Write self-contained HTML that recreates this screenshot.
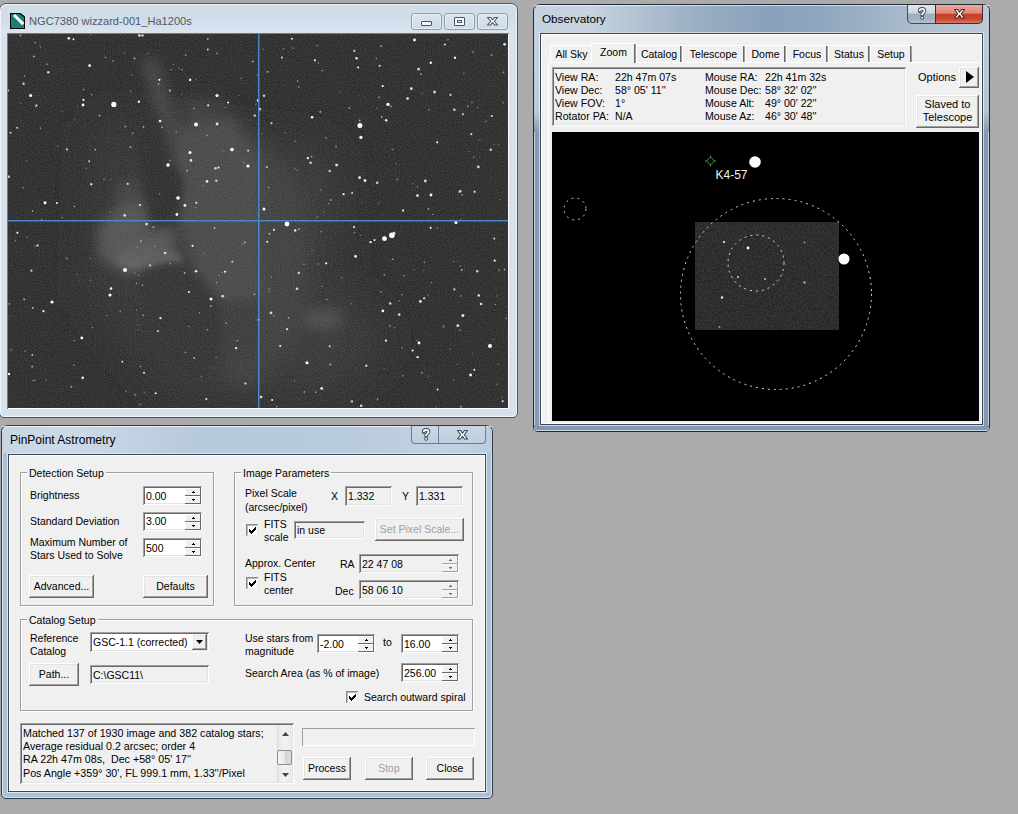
<!DOCTYPE html>
<html><head><meta charset="utf-8">
<style>
*{box-sizing:border-box}
html,body{margin:0;padding:0}
body{width:1018px;height:814px;overflow:hidden;position:relative;background:#ababab;font-family:"Liberation Sans",sans-serif;font-size:10.5px;color:#000}
.a{position:absolute}
.t{position:absolute;white-space:nowrap;line-height:13px}
.sunk{background:#fff;box-shadow:inset 1px 1px #a0a0a0,inset -1px -1px #fff,inset 2px 2px #696969,inset -2px -2px #e3e3e3}
.sunkg{background:#f0f0f0;box-shadow:inset 1px 1px #a0a0a0,inset -1px -1px #fff,inset 2px 2px #696969,inset -2px -2px #e3e3e3}
.btn{background:#f0f0f0;box-shadow:inset -1px -1px #696969,inset 1px 1px #fff,inset -2px -2px #a0a0a0,inset 2px 2px #e3e3e3;text-align:center;line-height:13px}
.grp{border:1px solid #a0a0a0;box-shadow:1px 1px #fff,inset 1px 1px #fff}
.gl{position:absolute;background:#f0f0f0;padding:0 2px;line-height:13px;white-space:nowrap}
.win{position:absolute;border:1px solid #3f4b58;border-radius:7px 7px 5px 5px}
.client{position:absolute;background:#f0f0f0;border:1px solid #5b6b7d}
.spin{position:absolute;width:16px}
.spin i{position:absolute;left:0;width:16px;height:8px;background:#f0f0f0;box-shadow:inset -1px -1px #696969,inset 1px 1px #fff}
.spin i:after{content:"";position:absolute;left:7px;width:3px;height:2px;background:#000}
.spin i.u{top:0}.spin i.d{top:8px}
.spin i.u:after{top:3px;clip-path:polygon(33% 0,67% 0,67% 50%,100% 50%,100% 100%,0 100%,0 50%,33% 50%)}
.spin i.d:after{top:3px;clip-path:polygon(0 0,100% 0,100% 50%,67% 50%,67% 100%,33% 100%,33% 50%,0 50%)}
.chk{position:absolute;width:12px;height:12px;background:#fff;box-shadow:inset 1px 1px #8a8a8a,inset -1px -1px #e8e8e8,inset 2px 2px #b8b8b8}
.tab{position:absolute;top:45px;height:17px;background:#f0f0f0;box-shadow:inset 1px 1px #fff,inset -1px 0 #a0a0a0,inset -2px 0 #696969;text-align:center;line-height:18px;font-size:10.5px}
</style></head><body>

<!-- ================= NGC7380 image window ================= -->
<div class="a" style="left:-1px;top:3px;width:519px;height:415px;border:1px solid #4c5560;border-radius:7px 7px 5px 5px;background:linear-gradient(#d2deea,#d0dce9 14px,#d9e4ef 28px,#d5e1ed 40px);box-shadow:inset 0 0 0 1px #eef4fa"></div>
<div class="a" style="left:10px;top:13px;width:15px;height:16px;background:#000;clip-path:polygon(0 0,70% 0,100% 22%,100% 100%,0 100%)"></div>
<div class="a" style="left:11px;top:14px;width:13px;height:14px;background:#1a7f7a;clip-path:polygon(0 0,68% 0,100% 24%,100% 100%,0 100%)"></div>
<div class="a" style="left:13px;top:16px;width:3px;height:13px;background:#fff;transform:rotate(-45deg);transform-origin:0 0"></div>
<div class="t" style="left:29px;top:14px;font-size:11.1px;color:#505a66;line-height:14px">NGC7380 wizzard-001_Ha1200s</div>
<div class="a" style="left:411px;top:13px;width:31px;height:17px;border:1px solid #8d9caf;border-radius:3px;background:linear-gradient(#dbe5ef,#cfdbe8);box-shadow:inset 0 0 0 1px rgba(255,255,255,.4)"></div>
<div class="a" style="left:444px;top:13px;width:31px;height:17px;border:1px solid #8d9caf;border-radius:3px;background:linear-gradient(#dbe5ef,#cfdbe8);box-shadow:inset 0 0 0 1px rgba(255,255,255,.4)"></div>
<div class="a" style="left:477px;top:13px;width:31px;height:17px;border:1px solid #8d9caf;border-radius:3px;background:linear-gradient(#dbe5ef,#cfdbe8);box-shadow:inset 0 0 0 1px rgba(255,255,255,.4)"></div>
<div class="a" style="left:421px;top:21px;width:11px;height:5px;border:1px solid #4a5460;border-radius:1px;background:#f4f6f8"></div>
<div class="a" style="left:454px;top:17px;width:11px;height:9px;border:1px solid #4a5460;border-radius:1px;background:#f4f6f8"></div>
<div class="a" style="left:457px;top:20px;width:5px;height:3px;border:1px solid #4a5460"></div>
<svg class="a" style="left:487px;top:17px" width="12" height="10"><path d="M0.5 0.5H3.6L5.5 2.9L7.4 0.5H10.5L7.3 4.25L10.5 8H7.4L5.5 5.6L3.6 8H0.5L3.7 4.25Z" fill="#fff" stroke="#4a5460" stroke-width="1.1" stroke-linejoin="round"/></svg>
<div class="a" style="left:7px;top:33px;width:502px;height:376px;box-shadow:inset 1px 1px #7a7a7a,inset -1px -1px #fff"></div>
<div class="a" style="left:8px;top:34px;width:500px;height:374px;overflow:hidden"><svg width="500" height="374" viewBox="0 0 500 374">
<defs>
<filter id="b1" x="-50%" y="-50%" width="200%" height="200%"><feGaussianBlur stdDeviation="10"/></filter>
<filter id="b2" x="-50%" y="-50%" width="200%" height="200%"><feGaussianBlur stdDeviation="6"/></filter>
<filter id="b4" x="-50%" y="-50%" width="200%" height="200%"><feGaussianBlur stdDeviation="5"/></filter>
<filter id="grain"><feTurbulence type="fractalNoise" baseFrequency="0.8" numOctaves="1" seed="5"/><feColorMatrix values="0 0 0 0 0.3  0 0 0 0 0.3  0 0 0 0 0.3  0 0 0 1.4 -0.5"/></filter>
<filter id="b5" x="-50%" y="-50%" width="200%" height="200%"><feGaussianBlur stdDeviation="3"/></filter>
<filter id="b3" x="-50%" y="-50%" width="200%" height="200%"><feGaussianBlur stdDeviation="22"/></filter>
</defs>
<rect width="500" height="374" fill="#2c2c2c"/>
<g transform="translate(-8,-34)">
<g filter="url(#b3)">
 <path d="M95 120 L330 150 L345 395 L180 405 L90 300 Z" fill="#363636"/>
 <ellipse cx="300" cy="200" rx="35" ry="50" fill="#3a3a3a"/>
 <ellipse cx="310" cy="340" rx="70" ry="50" fill="#393939"/>
</g>
<g filter="url(#b1)">
 <path d="M180 100 L215 100 L260 140 L290 180 L310 250 L300 330 L250 390 L225 380 L220 300 L180 220 Z" fill="#414141"/>
</g>
<g filter="url(#b2)">
 <path d="M178 130 L230 120 L258 160 L262 300 L225 304 L195 270 L178 220 Z" fill="#4a4a4a"/>
 <path d="M140 58 L158 58 L192 171 L172 175 Z" fill="#434343"/>
 <path d="M115 185 L150 175 L165 200 L155 222 L118 225 Z" fill="#424242"/>
 <path d="M98 225 L122 205 L152 200 L172 220 L178 262 L160 274 L125 274 L98 258 Z" fill="#535353"/>
 <ellipse cx="142" cy="256" rx="26" ry="13" fill="#5c5c5c"/>
 <path d="M225 300 L258 300 L262 360 L232 360 Z" fill="#3b3b3b"/>
 <ellipse cx="323" cy="319" rx="20" ry="11" fill="#4c4c4c"/>
</g>
<g filter="url(#b5)">
 <path d="M118 258 Q140 272 168 258 Q176 254 180 262" fill="none" stroke="#666" stroke-width="6"/>
 <path d="M110 232 Q120 222 132 228" fill="none" stroke="#5a5a5a" stroke-width="5"/>
 <path d="M182 140 Q188 190 182 225" fill="none" stroke="#4e4e4e" stroke-width="6"/>
</g>
<g filter="url(#b4)">
 <path d="M135 110 L160 120 L172 165 L185 180 L178 225 L150 230 L140 180 Z" fill="#2e2e2e"/>
 <path d="M140 270 L170 262 L195 280 L215 300 L222 340 L210 370 L170 368 L145 330 Z" fill="#323232"/>
</g>
</g>
<rect width="500" height="374" filter="url(#grain)" opacity="0.4"/>
<circle cx="105.8" cy="70.4" r="2.6" fill="#fff"/>
<circle cx="188.0" cy="90.5" r="2" fill="#fff"/>
<circle cx="224.0" cy="115.6" r="1.8" fill="#fff"/>
<circle cx="160.0" cy="131.0" r="1.8" fill="#fff"/>
<circle cx="351.9" cy="91.5" r="2.5" fill="#fff"/>
<circle cx="352.9" cy="103.3" r="1.6" fill="#fff"/>
<circle cx="380.0" cy="70.4" r="1.7" fill="#fff"/>
<circle cx="279.0" cy="190.0" r="2.4" fill="#fff"/>
<circle cx="383.9" cy="201.3" r="2.8" fill="#fff"/>
<circle cx="376.5" cy="204.7" r="2.4" fill="#fff"/>
<circle cx="117.0" cy="236.0" r="2" fill="#fff"/>
<circle cx="102.0" cy="261.0" r="1.6" fill="#fff"/>
<circle cx="44.0" cy="268.0" r="1.6" fill="#fff"/>
<circle cx="482.0" cy="312.0" r="2" fill="#fff"/>
<circle cx="22.6" cy="61.5" r="1.5" fill="#fff"/>
<circle cx="75.0" cy="71.0" r="1.4" fill="#fff"/>
<circle cx="209.0" cy="61.5" r="1.6" fill="#fff"/>
<circle cx="240.0" cy="132.0" r="1.6" fill="#fff"/>
<circle cx="170.0" cy="164.0" r="1.8" fill="#fff"/>
<circle cx="182.0" cy="118.6" r="1.5" fill="#fff"/>
<circle cx="448.0" cy="188.5" r="1.5" fill="#fff"/>
<circle cx="423.0" cy="161.0" r="1.4" fill="#fff"/>
<circle cx="203.0" cy="265.0" r="1.5" fill="#fff"/>
<circle cx="299.0" cy="328.7" r="1.5" fill="#fff"/>
<circle cx="37.0" cy="168.8" r="1.5" fill="#fff"/>
<circle cx="256.0" cy="175.0" r="1.5" fill="#fff"/>
<circle cx="357.0" cy="146.6" r="1.4" fill="#fff"/>
<circle cx="411.0" cy="309.0" r="1.4" fill="#fff"/>
<circle cx="462.6" cy="341.0" r="1.4" fill="#fff"/>
<circle cx="73.8" cy="304.0" r="1.4" fill="#fff"/>
<circle cx="161.9" cy="56.4" r="1.0" fill="rgb(204,204,204)"/>
<circle cx="410.6" cy="35.2" r="1.4" fill="rgb(203,203,203)"/>
<circle cx="454.9" cy="80.3" r="1.0" fill="rgb(227,227,227)"/>
<circle cx="209.1" cy="90.0" r="1.4" fill="rgb(227,227,227)"/>
<circle cx="29.6" cy="211.5" r="1.1" fill="rgb(240,240,240)"/>
<circle cx="313.7" cy="354.4" r="1.4" fill="rgb(237,237,237)"/>
<circle cx="198.3" cy="365.1" r="1.0" fill="rgb(235,235,235)"/>
<circle cx="429.2" cy="108.3" r="1.1" fill="rgb(234,234,234)"/>
<circle cx="58.9" cy="115.4" r="1.1" fill="rgb(206,206,206)"/>
<circle cx="290.8" cy="239.0" r="1.2" fill="rgb(206,206,206)"/>
<circle cx="273.9" cy="23.5" r="1.0" fill="rgb(239,239,239)"/>
<circle cx="103.0" cy="254.5" r="1.3" fill="rgb(249,249,249)"/>
<circle cx="157.1" cy="219.0" r="1.3" fill="rgb(223,223,223)"/>
<circle cx="149.9" cy="297.1" r="1.1" fill="rgb(205,205,205)"/>
<circle cx="287.2" cy="196.4" r="1.2" fill="rgb(246,246,246)"/>
<circle cx="224.4" cy="227.8" r="1.0" fill="rgb(207,207,207)"/>
<circle cx="256.0" cy="61.7" r="1.2" fill="rgb(209,209,209)"/>
<circle cx="466.6" cy="157.7" r="1.0" fill="rgb(248,248,248)"/>
<circle cx="279.0" cy="295.1" r="1.2" fill="rgb(221,221,221)"/>
<circle cx="347.6" cy="222.3" r="1.4" fill="rgb(251,251,251)"/>
<circle cx="228.1" cy="314.1" r="1.2" fill="rgb(230,230,230)"/>
<circle cx="348.5" cy="24.3" r="1.2" fill="rgb(241,241,241)"/>
<circle cx="289.0" cy="254.8" r="1.3" fill="rgb(218,218,218)"/>
<circle cx="358.3" cy="331.8" r="1.2" fill="rgb(201,201,201)"/>
<circle cx="470.3" cy="132.9" r="1.4" fill="rgb(207,207,207)"/>
<circle cx="246.8" cy="81.6" r="1.2" fill="rgb(208,208,208)"/>
<circle cx="369.2" cy="148.8" r="1.3" fill="rgb(205,205,205)"/>
<circle cx="83.2" cy="150.2" r="1.2" fill="rgb(208,208,208)"/>
<circle cx="409.6" cy="323.1" r="1.2" fill="rgb(245,245,245)"/>
<circle cx="207.6" cy="134.2" r="1.3" fill="rgb(214,214,214)"/>
<circle cx="75.5" cy="65.9" r="1.1" fill="rgb(242,242,242)"/>
<circle cx="116.7" cy="181.4" r="1.4" fill="rgb(211,211,211)"/>
<circle cx="131.4" cy="1.5" r="1.3" fill="rgb(234,234,234)"/>
<circle cx="184.6" cy="211.8" r="1.1" fill="rgb(244,244,244)"/>
<circle cx="429.6" cy="355.4" r="1.0" fill="rgb(229,229,229)"/>
<circle cx="449.8" cy="291.7" r="1.4" fill="rgb(225,225,225)"/>
<circle cx="199.0" cy="147.4" r="1.3" fill="rgb(240,240,240)"/>
<circle cx="200.2" cy="71.3" r="1.1" fill="rgb(228,228,228)"/>
<circle cx="81.2" cy="127.2" r="1.0" fill="rgb(206,206,206)"/>
<circle cx="0.1" cy="56.6" r="1.0" fill="rgb(223,223,223)"/>
<circle cx="306.9" cy="26.3" r="1.1" fill="rgb(239,239,239)"/>
<circle cx="188.1" cy="237.3" r="1.2" fill="rgb(238,238,238)"/>
<circle cx="182.1" cy="45.9" r="1.3" fill="rgb(229,229,229)"/>
<circle cx="240.2" cy="116.6" r="1.1" fill="rgb(206,206,206)"/>
<circle cx="374.8" cy="276.9" r="1.3" fill="rgb(253,253,253)"/>
<circle cx="346.0" cy="193.1" r="1.1" fill="rgb(233,233,233)"/>
<circle cx="180.9" cy="258.1" r="1.0" fill="rgb(248,248,248)"/>
<circle cx="264.1" cy="366.0" r="1.0" fill="rgb(244,244,244)"/>
<circle cx="422.7" cy="193.9" r="1.1" fill="rgb(222,222,222)"/>
<circle cx="386.0" cy="199.2" r="1.4" fill="rgb(221,221,221)"/>
<circle cx="318.2" cy="229.3" r="1.1" fill="rgb(251,251,251)"/>
<circle cx="119.7" cy="149.9" r="1.1" fill="rgb(212,212,212)"/>
<circle cx="258.8" cy="133.0" r="1.0" fill="rgb(201,201,201)"/>
<circle cx="395.1" cy="176.6" r="1.1" fill="rgb(244,244,244)"/>
<circle cx="302.6" cy="128.8" r="1.2" fill="rgb(223,223,223)"/>
<circle cx="40.3" cy="38.2" r="1.3" fill="rgb(212,212,212)"/>
<circle cx="168.9" cy="180.5" r="1.4" fill="rgb(253,253,253)"/>
<circle cx="1.0" cy="340.0" r="1.2" fill="rgb(251,251,251)"/>
<circle cx="321.6" cy="312.2" r="1.0" fill="rgb(224,224,224)"/>
<circle cx="391.2" cy="280.6" r="1.3" fill="rgb(211,211,211)"/>
<circle cx="217.0" cy="237.8" r="1.0" fill="rgb(251,251,251)"/>
<circle cx="473.1" cy="270.0" r="1.3" fill="rgb(225,225,225)"/>
<circle cx="371.7" cy="31.8" r="1.1" fill="rgb(210,210,210)"/>
<circle cx="496.6" cy="10.3" r="1.4" fill="rgb(229,229,229)"/>
<circle cx="403.3" cy="54.7" r="1.4" fill="rgb(230,230,230)"/>
<circle cx="328.6" cy="131.1" r="1.4" fill="rgb(235,235,235)"/>
<circle cx="65.5" cy="5.3" r="1.0" fill="rgb(233,233,233)"/>
<circle cx="374.7" cy="52.1" r="1.1" fill="rgb(252,252,252)"/>
<circle cx="437.0" cy="10.5" r="1.1" fill="rgb(218,218,218)"/>
<circle cx="250.6" cy="285.6" r="1.2" fill="rgb(216,216,216)"/>
<circle cx="272.2" cy="312.0" r="1.0" fill="rgb(247,247,247)"/>
<circle cx="176.9" cy="171.4" r="1.4" fill="rgb(252,252,252)"/>
<circle cx="452.1" cy="157.3" r="1.4" fill="rgb(208,208,208)"/>
<circle cx="265.9" cy="195.8" r="1.0" fill="rgb(255,255,255)"/>
<circle cx="220.1" cy="68.5" r="1.0" fill="rgb(249,249,249)"/>
<circle cx="399.6" cy="64.5" r="1.3" fill="rgb(239,239,239)"/>
<circle cx="362.6" cy="208.1" r="1.2" fill="rgb(243,243,243)"/>
<circle cx="259.2" cy="207.7" r="1.0" fill="rgb(235,235,235)"/>
<circle cx="28.4" cy="71.5" r="1.0" fill="rgb(249,249,249)"/>
<circle cx="48.9" cy="169.1" r="1.0" fill="rgb(248,248,248)"/>
<circle cx="447.0" cy="23.7" r="1.2" fill="rgb(239,239,239)"/>
<circle cx="486.7" cy="226.7" r="1.1" fill="rgb(244,244,244)"/>
<circle cx="138.6" cy="190.1" r="1.3" fill="rgb(232,232,232)"/>
<circle cx="470.8" cy="261.5" r="1.2" fill="rgb(235,235,235)"/>
<circle cx="446.4" cy="75.8" r="1.3" fill="rgb(208,208,208)"/>
<circle cx="208.3" cy="146.7" r="1.2" fill="rgb(204,204,204)"/>
<circle cx="335.6" cy="160.2" r="1.1" fill="rgb(242,242,242)"/>
<circle cx="151.4" cy="45.8" r="1.1" fill="rgb(245,245,245)"/>
<circle cx="321.7" cy="137.0" r="1.2" fill="rgb(208,208,208)"/>
<circle cx="483.8" cy="82.1" r="1.0" fill="rgb(225,225,225)"/>
<circle cx="442.5" cy="60.9" r="1.1" fill="rgb(210,210,210)"/>
<circle cx="353.2" cy="371.8" r="1.3" fill="rgb(221,221,221)"/>
<circle cx="210.6" cy="133.4" r="1.0" fill="rgb(246,246,246)"/>
<circle cx="183.0" cy="126.4" r="1.3" fill="rgb(228,228,228)"/>
<circle cx="351.6" cy="143.7" r="1.4" fill="rgb(239,239,239)"/>
<circle cx="147.7" cy="359.3" r="1.0" fill="rgb(250,250,250)"/>
<circle cx="114.3" cy="327.8" r="1.0" fill="rgb(216,216,216)"/>
<circle cx="136.0" cy="338.8" r="1.1" fill="rgb(217,217,217)"/>
<circle cx="377.9" cy="306.6" r="1.2" fill="rgb(225,225,225)"/>
<circle cx="74.7" cy="343.8" r="1.4" fill="rgb(231,231,231)"/>
<circle cx="350.2" cy="33.5" r="1.0" fill="rgb(251,251,251)"/>
<circle cx="344.1" cy="159.1" r="1.0" fill="rgb(217,217,217)"/>
<circle cx="469.2" cy="237.3" r="1.2" fill="rgb(205,205,205)"/>
<circle cx="304.1" cy="83.2" r="1.2" fill="rgb(255,255,255)"/>
<circle cx="60.8" cy="4.3" r="1.4" fill="rgb(226,226,226)"/>
<circle cx="463.3" cy="100.2" r="1.1" fill="rgb(202,202,202)"/>
<circle cx="263.5" cy="89.2" r="1.0" fill="rgb(210,210,210)"/>
<circle cx="130.9" cy="67.7" r="1.2" fill="rgb(240,240,240)"/>
<circle cx="152.5" cy="284.1" r="1.2" fill="rgb(228,228,228)"/>
<circle cx="250.0" cy="66.5" r="1.2" fill="rgb(251,251,251)"/>
<circle cx="9.1" cy="93.7" r="1.0" fill="rgb(201,201,201)"/>
<circle cx="366.5" cy="206.1" r="1.1" fill="rgb(232,232,232)"/>
<circle cx="237.4" cy="349.6" r="1.0" fill="rgb(242,242,242)"/>
<circle cx="409.5" cy="161.6" r="1.3" fill="rgb(234,234,234)"/>
<circle cx="417.3" cy="147.0" r="1.4" fill="rgb(219,219,219)"/>
<circle cx="343.9" cy="367.4" r="1.2" fill="rgb(212,212,212)"/>
<circle cx="416.1" cy="264.3" r="1.1" fill="rgb(225,225,225)"/>
<circle cx="494.7" cy="367.2" r="1.1" fill="rgb(200,200,200)"/>
<circle cx="35.4" cy="277.1" r="1.2" fill="rgb(227,227,227)"/>
<circle cx="81.6" cy="31.6" r="1.3" fill="rgb(255,255,255)"/>
<circle cx="253.0" cy="363.1" r="1.4" fill="rgb(215,215,215)"/>
<circle cx="346.3" cy="16.9" r="1.1" fill="rgb(210,210,210)"/>
<circle cx="134.5" cy="1.4" r="1.2" fill="rgb(221,221,221)"/>
<circle cx="486.3" cy="204.6" r="1.1" fill="rgb(202,202,202)"/>
<circle cx="482.8" cy="115.8" r="1.2" fill="rgb(211,211,211)"/>
<circle cx="0.5" cy="142.7" r="1.3" fill="rgb(217,217,217)"/>
<circle cx="251.4" cy="75.2" r="1.4" fill="rgb(249,249,249)"/>
<circle cx="2.5" cy="98.8" r="1.0" fill="rgb(209,209,209)"/>
<circle cx="199.8" cy="15.6" r="1.0" fill="rgb(219,219,219)"/>
<circle cx="152.1" cy="87.1" r="1.4" fill="rgb(233,233,233)"/>
<circle cx="426.6" cy="58.1" r="1.4" fill="rgb(224,224,224)"/>
<circle cx="382.2" cy="269.5" r="1.3" fill="rgb(209,209,209)"/>
<circle cx="142.1" cy="231.4" r="1.1" fill="rgb(202,202,202)"/>
<circle cx="412.4" cy="267.4" r="1.4" fill="rgb(240,240,240)"/>
<circle cx="214.6" cy="262.2" r="1.4" fill="rgb(208,208,208)"/>
<circle cx="454.9" cy="281.6" r="1.4" fill="rgb(253,253,253)"/>
<circle cx="406.5" cy="6.0" r="1.4" fill="rgb(251,251,251)"/>
<circle cx="446.4" cy="255.4" r="1.1" fill="rgb(205,205,205)"/>
<circle cx="15.6" cy="49.8" r="1.2" fill="rgb(206,206,206)"/>
<circle cx="188.3" cy="168.8" r="1.0" fill="rgb(240,240,240)"/>
<circle cx="9.4" cy="198.8" r="1.1" fill="rgb(231,231,231)"/>
<circle cx="131.9" cy="170.9" r="1.0" fill="rgb(247,247,247)"/>
<circle cx="466.3" cy="335.8" r="1.0" fill="rgb(242,242,242)"/>
<circle cx="263.0" cy="278.9" r="1.3" fill="rgb(216,216,216)"/>
<circle cx="404.6" cy="316.5" r="1.1" fill="rgb(246,246,246)"/>
<circle cx="378.2" cy="86.3" r="1.3" fill="rgb(231,231,231)"/>
<circle cx="422.8" cy="28.7" r="1.2" fill="rgb(249,249,249)"/>
<circle cx="23.4" cy="236.7" r="1.1" fill="rgb(204,204,204)"/>
<circle cx="299.9" cy="124.1" r="1.2" fill="rgb(239,239,239)"/>
<circle cx="283.9" cy="4.7" r="1.0" fill="rgb(231,231,231)"/>
<circle cx="134.4" cy="251.3" r="0.7" fill="rgb(182,182,182)"/>
<circle cx="145.4" cy="193.2" r="0.9" fill="rgb(179,179,179)"/>
<circle cx="233.2" cy="44.3" r="0.7" fill="rgb(159,159,159)"/>
<circle cx="489.1" cy="350.2" r="0.6" fill="rgb(157,157,157)"/>
<circle cx="229.5" cy="306.6" r="0.9" fill="rgb(154,154,154)"/>
<circle cx="193.4" cy="342.8" r="0.7" fill="rgb(129,129,129)"/>
<circle cx="290.7" cy="53.0" r="0.8" fill="rgb(166,166,166)"/>
<circle cx="66.3" cy="306.8" r="0.8" fill="rgb(134,134,134)"/>
<circle cx="351.7" cy="86.5" r="0.9" fill="rgb(170,170,170)"/>
<circle cx="12.4" cy="1.3" r="0.9" fill="rgb(177,177,177)"/>
<circle cx="202.7" cy="272.0" r="0.9" fill="rgb(164,164,164)"/>
<circle cx="188.1" cy="45.2" r="0.8" fill="rgb(120,120,120)"/>
<circle cx="162.3" cy="126.5" r="0.9" fill="rgb(135,135,135)"/>
<circle cx="469.9" cy="73.2" r="0.6" fill="rgb(157,157,157)"/>
<circle cx="126.6" cy="24.3" r="0.9" fill="rgb(195,195,195)"/>
<circle cx="38.2" cy="346.1" r="0.8" fill="rgb(126,126,126)"/>
<circle cx="140.3" cy="19.3" r="0.8" fill="rgb(139,139,139)"/>
<circle cx="124.7" cy="99.4" r="0.8" fill="rgb(144,144,144)"/>
<circle cx="386.6" cy="293.6" r="0.9" fill="rgb(123,123,123)"/>
<circle cx="406.0" cy="236.0" r="0.7" fill="rgb(130,130,130)"/>
<circle cx="24.7" cy="273.9" r="0.9" fill="rgb(198,198,198)"/>
<circle cx="376.3" cy="241.0" r="0.8" fill="rgb(182,182,182)"/>
<circle cx="24.5" cy="346.6" r="0.7" fill="rgb(141,141,141)"/>
<circle cx="236.1" cy="128.5" r="0.8" fill="rgb(152,152,152)"/>
<circle cx="369.5" cy="365.1" r="0.8" fill="rgb(171,171,171)"/>
<circle cx="328.0" cy="112.5" r="0.9" fill="rgb(135,135,135)"/>
<circle cx="83.7" cy="60.5" r="0.7" fill="rgb(184,184,184)"/>
<circle cx="453.0" cy="185.9" r="0.7" fill="rgb(177,177,177)"/>
<circle cx="453.1" cy="372.7" r="0.9" fill="rgb(174,174,174)"/>
<circle cx="69.8" cy="72.0" r="0.6" fill="rgb(142,142,142)"/>
<circle cx="171.0" cy="34.1" r="0.7" fill="rgb(167,167,167)"/>
<circle cx="129.2" cy="213.0" r="0.6" fill="rgb(172,172,172)"/>
<circle cx="191.4" cy="278.9" r="0.7" fill="rgb(168,168,168)"/>
<circle cx="135.1" cy="281.3" r="0.9" fill="rgb(155,155,155)"/>
<circle cx="287.1" cy="134.7" r="0.7" fill="rgb(131,131,131)"/>
<circle cx="135.5" cy="92.9" r="0.9" fill="rgb(177,177,177)"/>
<circle cx="215.9" cy="116.7" r="0.6" fill="rgb(136,136,136)"/>
<circle cx="16.1" cy="265.4" r="0.9" fill="rgb(195,195,195)"/>
<circle cx="244.9" cy="27.4" r="0.9" fill="rgb(177,177,177)"/>
<circle cx="124.2" cy="40.8" r="0.7" fill="rgb(139,139,139)"/>
<circle cx="261.2" cy="255.1" r="0.9" fill="rgb(130,130,130)"/>
<circle cx="275.8" cy="14.8" r="0.7" fill="rgb(149,149,149)"/>
<circle cx="284.7" cy="14.1" r="0.8" fill="rgb(136,136,136)"/>
<circle cx="313.2" cy="197.6" r="0.9" fill="rgb(134,134,134)"/>
<circle cx="49.7" cy="112.3" r="0.7" fill="rgb(169,169,169)"/>
<circle cx="130.4" cy="295.6" r="0.6" fill="rgb(121,121,121)"/>
<circle cx="268.7" cy="372.6" r="0.8" fill="rgb(160,160,160)"/>
<circle cx="322.3" cy="330.5" r="0.9" fill="rgb(187,187,187)"/>
<circle cx="117.4" cy="92.4" r="0.9" fill="rgb(159,159,159)"/>
<circle cx="27.7" cy="72.6" r="0.9" fill="rgb(130,130,130)"/>
<circle cx="128.6" cy="249.6" r="0.8" fill="rgb(149,149,149)"/>
<circle cx="246.5" cy="260.2" r="0.9" fill="rgb(166,166,166)"/>
<circle cx="341.3" cy="74.1" r="0.8" fill="rgb(184,184,184)"/>
<circle cx="33.7" cy="185.4" r="0.7" fill="rgb(159,159,159)"/>
<circle cx="382.9" cy="72.5" r="0.9" fill="rgb(148,148,148)"/>
<circle cx="132.5" cy="332.6" r="0.6" fill="rgb(199,199,199)"/>
<circle cx="247.9" cy="70.1" r="0.7" fill="rgb(182,182,182)"/>
<circle cx="208.5" cy="248.8" r="0.7" fill="rgb(170,170,170)"/>
<circle cx="27.2" cy="8.8" r="0.7" fill="rgb(173,173,173)"/>
<circle cx="25.9" cy="22.5" r="0.9" fill="rgb(177,177,177)"/>
<circle cx="449.1" cy="330.5" r="0.6" fill="rgb(130,130,130)"/>
<circle cx="465.8" cy="123.1" r="0.7" fill="rgb(187,187,187)"/>
<circle cx="373.2" cy="11.9" r="0.9" fill="rgb(167,167,167)"/>
<circle cx="492.5" cy="165.5" r="0.6" fill="rgb(120,120,120)"/>
<circle cx="39.1" cy="30.2" r="0.9" fill="rgb(135,135,135)"/>
<circle cx="280.6" cy="283.8" r="0.9" fill="rgb(165,165,165)"/>
<circle cx="384.4" cy="115.5" r="0.9" fill="rgb(131,131,131)"/>
<circle cx="24.6" cy="177.1" r="0.8" fill="rgb(189,189,189)"/>
<circle cx="459.8" cy="72.2" r="0.8" fill="rgb(180,180,180)"/>
<circle cx="15.1" cy="153.6" r="0.9" fill="rgb(125,125,125)"/>
<circle cx="187.8" cy="173.6" r="0.6" fill="rgb(152,152,152)"/>
<circle cx="97.5" cy="23.5" r="0.8" fill="rgb(166,166,166)"/>
<circle cx="136.2" cy="358.2" r="0.6" fill="rgb(153,153,153)"/>
<circle cx="373.2" cy="257.9" r="0.8" fill="rgb(158,158,158)"/>
<circle cx="1.9" cy="282.6" r="0.6" fill="rgb(123,123,123)"/>
<circle cx="413.0" cy="40.1" r="0.9" fill="rgb(169,169,169)"/>
<circle cx="394.9" cy="341.7" r="0.9" fill="rgb(136,136,136)"/>
<circle cx="464.0" cy="68.4" r="0.8" fill="rgb(139,139,139)"/>
<circle cx="303.6" cy="122.6" r="0.8" fill="rgb(178,178,178)"/>
<circle cx="180.9" cy="292.6" r="0.6" fill="rgb(185,185,185)"/>
<circle cx="98.7" cy="281.6" r="0.7" fill="rgb(172,172,172)"/>
<circle cx="32.4" cy="12.7" r="0.8" fill="rgb(140,140,140)"/>
<circle cx="490.1" cy="330.4" r="0.6" fill="rgb(153,153,153)"/>
<circle cx="312.3" cy="77.9" r="0.9" fill="rgb(183,183,183)"/>
<circle cx="494.2" cy="363.6" r="0.7" fill="rgb(149,149,149)"/>
<circle cx="66.5" cy="172.4" r="0.7" fill="rgb(188,188,188)"/>
<circle cx="423.5" cy="248.5" r="0.6" fill="rgb(157,157,157)"/>
<circle cx="146.9" cy="212.0" r="0.8" fill="rgb(152,152,152)"/>
<circle cx="369.0" cy="74.5" r="0.7" fill="rgb(143,143,143)"/>
<circle cx="122.7" cy="57.3" r="0.7" fill="rgb(161,161,161)"/>
<circle cx="32.4" cy="94.1" r="0.7" fill="rgb(184,184,184)"/>
<circle cx="263.2" cy="243.0" r="0.6" fill="rgb(179,179,179)"/>
<circle cx="495.5" cy="38.3" r="0.9" fill="rgb(149,149,149)"/>
<circle cx="420.3" cy="342.0" r="0.6" fill="rgb(157,157,157)"/>
<circle cx="116.4" cy="18.8" r="0.7" fill="rgb(129,129,129)"/>
<circle cx="186.1" cy="323.9" r="0.9" fill="rgb(197,197,197)"/>
<circle cx="130.0" cy="290.9" r="0.6" fill="rgb(133,133,133)"/>
<circle cx="318.7" cy="265.4" r="0.8" fill="rgb(147,147,147)"/>
<circle cx="18.7" cy="127.2" r="0.6" fill="rgb(146,146,146)"/>
<circle cx="499.9" cy="14.3" r="0.7" fill="rgb(121,121,121)"/>
<circle cx="409.4" cy="153.0" r="0.8" fill="rgb(143,143,143)"/>
<circle cx="310.5" cy="29.1" r="0.6" fill="rgb(183,183,183)"/>
<circle cx="274.0" cy="23.7" r="0.6" fill="rgb(170,170,170)"/>
<circle cx="332.0" cy="57.8" r="0.6" fill="rgb(140,140,140)"/>
<circle cx="198.9" cy="101.4" r="0.8" fill="rgb(159,159,159)"/>
<circle cx="208.9" cy="19.2" r="0.8" fill="rgb(173,173,173)"/>
<circle cx="208.2" cy="323.2" r="0.8" fill="rgb(145,145,145)"/>
<circle cx="195.4" cy="151.5" r="0.6" fill="rgb(175,175,175)"/>
<circle cx="450.8" cy="158.5" r="0.6" fill="rgb(171,171,171)"/>
<circle cx="288.9" cy="136.4" r="0.7" fill="rgb(136,136,136)"/>
<circle cx="7.4" cy="206.3" r="0.9" fill="rgb(131,131,131)"/>
<circle cx="286.4" cy="346.8" r="0.7" fill="rgb(138,138,138)"/>
<circle cx="174.0" cy="60.5" r="0.7" fill="rgb(128,128,128)"/>
<circle cx="54.4" cy="183.5" r="0.7" fill="rgb(158,158,158)"/>
<circle cx="63.3" cy="352.7" r="0.9" fill="rgb(160,160,160)"/>
<circle cx="26.7" cy="346.4" r="0.9" fill="rgb(131,131,131)"/>
<circle cx="452.1" cy="232.0" r="0.7" fill="rgb(148,148,148)"/>
<circle cx="310.5" cy="229.9" r="0.7" fill="rgb(180,180,180)"/>
<circle cx="91.5" cy="81.6" r="0.9" fill="rgb(186,186,186)"/>
<circle cx="78.2" cy="134.3" r="0.7" fill="rgb(151,151,151)"/>
<circle cx="485.3" cy="305.1" r="0.7" fill="rgb(125,125,125)"/>
<circle cx="441.9" cy="315.1" r="0.6" fill="rgb(161,161,161)"/>
<circle cx="58.9" cy="224.2" r="0.8" fill="rgb(173,173,173)"/>
<circle cx="154.1" cy="93.2" r="0.9" fill="rgb(167,167,167)"/>
<circle cx="223.4" cy="163.9" r="0.6" fill="rgb(120,120,120)"/>
<circle cx="309.4" cy="183.1" r="0.7" fill="rgb(177,177,177)"/>
<circle cx="381.8" cy="291.7" r="0.9" fill="rgb(142,142,142)"/>
<circle cx="405.3" cy="149.7" r="0.6" fill="rgb(136,136,136)"/>
<circle cx="179.3" cy="136.6" r="0.9" fill="rgb(184,184,184)"/>
<circle cx="255.1" cy="15.2" r="0.7" fill="rgb(130,130,130)"/>
<circle cx="461.1" cy="117.3" r="0.6" fill="rgb(126,126,126)"/>
<circle cx="376.0" cy="334.7" r="0.7" fill="rgb(123,123,123)"/>
<circle cx="428.5" cy="372.6" r="0.6" fill="rgb(144,144,144)"/>
<circle cx="65.8" cy="331.2" r="0.8" fill="rgb(141,141,141)"/>
<circle cx="343.1" cy="269.7" r="0.7" fill="rgb(128,128,128)"/>
<circle cx="416.5" cy="228.3" r="0.8" fill="rgb(140,140,140)"/>
<circle cx="161.9" cy="229.5" r="0.9" fill="rgb(138,138,138)"/>
<circle cx="127.1" cy="360.7" r="0.9" fill="rgb(146,146,146)"/>
<circle cx="295.9" cy="230.3" r="0.7" fill="rgb(160,160,160)"/>
<circle cx="186.1" cy="74.4" r="0.9" fill="rgb(140,140,140)"/>
<circle cx="318.3" cy="104.0" r="0.8" fill="rgb(168,168,168)"/>
<circle cx="84.4" cy="293.5" r="0.6" fill="rgb(187,187,187)"/>
<circle cx="24.3" cy="321.0" r="0.9" fill="rgb(191,191,191)"/>
<circle cx="260.7" cy="257.6" r="0.6" fill="rgb(152,152,152)"/>
<circle cx="496.5" cy="235.5" r="0.9" fill="rgb(167,167,167)"/>
<circle cx="132.4" cy="370.4" r="0.7" fill="rgb(166,166,166)"/>
<circle cx="165.4" cy="30.4" r="0.7" fill="rgb(142,142,142)"/>
<circle cx="307.7" cy="358.3" r="0.8" fill="rgb(186,186,186)"/>
<circle cx="126.8" cy="239.1" r="0.8" fill="rgb(120,120,120)"/>
<circle cx="373.6" cy="82.9" r="0.8" fill="rgb(198,198,198)"/>
<circle cx="312.8" cy="156.2" r="0.8" fill="rgb(126,126,126)"/>
<circle cx="66.0" cy="85.0" r="0.6" fill="rgb(122,122,122)"/>
<circle cx="27.2" cy="212.1" r="0.8" fill="rgb(133,133,133)"/>
<circle cx="261.5" cy="199.8" r="0.9" fill="rgb(194,194,194)"/>
<circle cx="150.6" cy="50.0" r="0.8" fill="rgb(199,199,199)"/>
<circle cx="414.2" cy="59.3" r="0.6" fill="rgb(151,151,151)"/>
<circle cx="353.7" cy="168.6" r="0.6" fill="rgb(138,138,138)"/>
<circle cx="435.6" cy="292.5" r="0.9" fill="rgb(153,153,153)"/>
<circle cx="483.6" cy="21.0" r="0.8" fill="rgb(196,196,196)"/>
<circle cx="322.8" cy="166.0" r="0.9" fill="rgb(151,151,151)"/>
<circle cx="82.5" cy="0.1" r="0.6" fill="rgb(188,188,188)"/>
<circle cx="12.6" cy="69.4" r="0.7" fill="rgb(127,127,127)"/>
<circle cx="455.9" cy="39.2" r="0.7" fill="rgb(138,138,138)"/>
<circle cx="206.6" cy="193.8" r="0.9" fill="rgb(198,198,198)"/>
<circle cx="87.3" cy="115.7" r="0.8" fill="rgb(200,200,200)"/>
<circle cx="24.2" cy="332.6" r="0.9" fill="rgb(188,188,188)"/>
<circle cx="3.2" cy="315.8" r="0.9" fill="rgb(130,130,130)"/>
<circle cx="370.9" cy="169.2" r="0.7" fill="rgb(133,133,133)"/>
<circle cx="130.7" cy="240.9" r="0.6" fill="rgb(162,162,162)"/>
<circle cx="445.6" cy="346.0" r="0.8" fill="rgb(126,126,126)"/>
<circle cx="133.0" cy="207.1" r="0.9" fill="rgb(186,186,186)"/>
<circle cx="485.9" cy="110.6" r="0.7" fill="rgb(130,130,130)"/>
<circle cx="440.0" cy="5.7" r="0.8" fill="rgb(150,150,150)"/>
<circle cx="420.9" cy="75.8" r="0.7" fill="rgb(161,161,161)"/>
<circle cx="96.0" cy="145.4" r="0.7" fill="rgb(168,168,168)"/>
<circle cx="453.8" cy="235.9" r="0.9" fill="rgb(180,180,180)"/>
<circle cx="419.9" cy="260.9" r="0.6" fill="rgb(175,175,175)"/>
<circle cx="477.8" cy="87.5" r="0.8" fill="rgb(147,147,147)"/>
<circle cx="195.8" cy="218.9" r="0.7" fill="rgb(138,138,138)"/>
<circle cx="16.5" cy="41.8" r="0.7" fill="rgb(164,164,164)"/>
<circle cx="488.7" cy="262.1" r="0.6" fill="rgb(125,125,125)"/>
<circle cx="69.2" cy="240.7" r="0.6" fill="rgb(128,128,128)"/>
<circle cx="368.4" cy="24.6" r="0.8" fill="rgb(145,145,145)"/>
<circle cx="408.8" cy="306.5" r="0.6" fill="rgb(169,169,169)"/>
<circle cx="53.6" cy="76.9" r="0.6" fill="rgb(124,124,124)"/>
<circle cx="17.2" cy="317.0" r="0.6" fill="rgb(200,200,200)"/>
<circle cx="316.1" cy="178.4" r="0.7" fill="rgb(132,132,132)"/>
<circle cx="396.0" cy="241.7" r="0.8" fill="rgb(160,160,160)"/>
<circle cx="168.3" cy="97.7" r="0.8" fill="rgb(152,152,152)"/>
<circle cx="465.0" cy="18.1" r="0.8" fill="rgb(161,161,161)"/>
<circle cx="384.6" cy="225.2" r="0.9" fill="rgb(156,156,156)"/>
<circle cx="309.1" cy="11.6" r="0.9" fill="rgb(123,123,123)"/>
<circle cx="218.2" cy="289.1" r="0.8" fill="rgb(180,180,180)"/>
<circle cx="352.3" cy="201.2" r="0.7" fill="rgb(131,131,131)"/>
<circle cx="287.3" cy="107.4" r="0.9" fill="rgb(120,120,120)"/>
<circle cx="261.8" cy="107.8" r="0.6" fill="rgb(120,120,120)"/>
<circle cx="173.9" cy="35.8" r="0.7" fill="rgb(183,183,183)"/>
<circle cx="296.3" cy="358.0" r="0.8" fill="rgb(193,193,193)"/>
<circle cx="471.9" cy="106.1" r="0.7" fill="rgb(149,149,149)"/>
<circle cx="249.2" cy="41.1" r="0.6" fill="rgb(182,182,182)"/>
<circle cx="394.0" cy="260.7" r="0.6" fill="rgb(200,200,200)"/>
<circle cx="163.3" cy="35.6" r="0.9" fill="rgb(131,131,131)"/>
<circle cx="211.1" cy="241.6" r="0.8" fill="rgb(146,146,146)"/>
<circle cx="151.6" cy="160.1" r="0.7" fill="rgb(168,168,168)"/>
<circle cx="491.2" cy="235.9" r="0.9" fill="rgb(136,136,136)"/>
<circle cx="265.8" cy="282.2" r="0.6" fill="rgb(164,164,164)"/>
<circle cx="290.8" cy="195.1" r="0.9" fill="rgb(190,190,190)"/>
<circle cx="371.0" cy="63.4" r="0.9" fill="rgb(152,152,152)"/>
<circle cx="289.6" cy="47.1" r="0.9" fill="rgb(150,150,150)"/>
<circle cx="253.9" cy="100.0" r="0.7" fill="rgb(139,139,139)"/>
<circle cx="487.4" cy="270.5" r="0.8" fill="rgb(140,140,140)"/>
<circle cx="118.1" cy="357.5" r="0.8" fill="rgb(133,133,133)"/>
<circle cx="82.3" cy="246.1" r="0.7" fill="rgb(169,169,169)"/>
<circle cx="75.5" cy="55.5" r="0.8" fill="rgb(158,158,158)"/>
<circle cx="217.5" cy="73.4" r="0.6" fill="rgb(155,155,155)"/>
<circle cx="103.2" cy="145.2" r="0.6" fill="rgb(121,121,121)"/>
<circle cx="199.5" cy="295.8" r="0.7" fill="rgb(184,184,184)"/>
<circle cx="490.4" cy="110.8" r="0.6" fill="rgb(138,138,138)"/>
<circle cx="128.6" cy="276.1" r="0.6" fill="rgb(151,151,151)"/>
<circle cx="454.0" cy="160.8" r="0.9" fill="rgb(149,149,149)"/>
<circle cx="333.9" cy="244.0" r="0.7" fill="rgb(143,143,143)"/>
<circle cx="320.8" cy="169.8" r="0.8" fill="rgb(153,153,153)"/>
<circle cx="314.1" cy="36.6" r="0.9" fill="rgb(151,151,151)"/>
<circle cx="391.2" cy="266.7" r="0.7" fill="rgb(152,152,152)"/>
<circle cx="424.7" cy="180.5" r="0.6" fill="rgb(199,199,199)"/>
<circle cx="429.3" cy="193.8" r="0.7" fill="rgb(161,161,161)"/>
<circle cx="389.1" cy="145.4" r="0.9" fill="rgb(133,133,133)"/>
<circle cx="19.1" cy="203.2" r="0.7" fill="rgb(145,145,145)"/>
<circle cx="259.6" cy="37.8" r="0.9" fill="rgb(189,189,189)"/>
<circle cx="102.5" cy="177.9" r="0.6" fill="rgb(167,167,167)"/>
<circle cx="260.8" cy="153.5" r="0.9" fill="rgb(146,146,146)"/>
<circle cx="495.1" cy="68.7" r="0.6" fill="rgb(198,198,198)"/>
<circle cx="177.7" cy="21.2" r="0.8" fill="rgb(168,168,168)"/>
<circle cx="199.8" cy="5.0" r="0.9" fill="rgb(173,173,173)"/>
<circle cx="314.3" cy="252.4" r="0.8" fill="rgb(133,133,133)"/>
<circle cx="112.2" cy="277.3" r="0.7" fill="rgb(170,170,170)"/>
<circle cx="231.1" cy="61.5" r="0.6" fill="rgb(144,144,144)"/>
<circle cx="234.6" cy="210.2" r="0.7" fill="rgb(138,138,138)"/>
<circle cx="176.6" cy="238.9" r="0.9" fill="rgb(179,179,179)"/>
<circle cx="498.1" cy="284.2" r="0.7" fill="rgb(180,180,180)"/>
<circle cx="177.4" cy="318.2" r="0.8" fill="rgb(168,168,168)"/>
<circle cx="343.7" cy="367.6" r="0.7" fill="rgb(181,181,181)"/>
<circle cx="1.3" cy="269.9" r="0.8" fill="rgb(165,165,165)"/>
<circle cx="122.5" cy="112.9" r="0.9" fill="rgb(182,182,182)"/>
<circle cx="214.2" cy="238.4" r="0.8" fill="rgb(139,139,139)"/>
<circle cx="464.4" cy="319.6" r="0.6" fill="rgb(130,130,130)"/>
<circle cx="413.9" cy="338.8" r="0.7" fill="rgb(187,187,187)"/>
<circle cx="415.7" cy="236.8" r="0.6" fill="rgb(121,121,121)"/>
<circle cx="104.9" cy="26.9" r="0.8" fill="rgb(152,152,152)"/>
<circle cx="304.1" cy="216.4" r="0.7" fill="rgb(143,143,143)"/>
<circle cx="388.2" cy="129.6" r="0.7" fill="rgb(146,146,146)"/>
<circle cx="452.0" cy="296.1" r="0.7" fill="rgb(198,198,198)"/>
<circle cx="445.6" cy="227.5" r="0.6" fill="rgb(190,190,190)"/>
<circle cx="394.0" cy="313.7" r="0.7" fill="rgb(183,183,183)"/>
<circle cx="346.4" cy="198.5" r="0.9" fill="rgb(134,134,134)"/>
<circle cx="277.5" cy="98.9" r="0.7" fill="rgb(137,137,137)"/>
<circle cx="236.6" cy="208.4" r="0.9" fill="rgb(179,179,179)"/>
<circle cx="452.7" cy="262.0" r="0.7" fill="rgb(183,183,183)"/>
<circle cx="82.3" cy="224.3" r="0.6" fill="rgb(140,140,140)"/>
<circle cx="420.4" cy="175.0" r="0.9" fill="rgb(157,157,157)"/>
<rect x="250" y="0" width="1" height="374" fill="#4a86cc"/><rect x="251" y="0" width="1" height="374" fill="#4a86cc" opacity="0.45"/>
<rect x="0" y="186" width="500" height="1" fill="#4a86cc"/><rect x="0" y="187" width="500" height="1" fill="#4a86cc" opacity="0.45"/>
</svg></div>

<!-- ================= Observatory window ================= -->
<div class="a" style="left:533px;top:4px;width:457px;height:428px;border:1px solid #1f2a36;border-radius:7px 7px 5px 5px;background:#8499b3;box-shadow:inset 0 0 0 1px rgba(255,255,255,.55)"></div>
<div class="a" style="left:534px;top:5px;width:455px;height:27px;border-radius:6px 6px 0 0;background:linear-gradient(90deg,#c4d1de,#c8d4e0 12%,#aebfcf 25%,#98adc2 38%,#8aa1bb 52%,#8ea5be 62%,#a3b6c9 78%,#b4c3d2 90%,#bcc9d6)"></div>
<div class="a" style="left:534px;top:5px;width:455px;height:1px;background:rgba(255,255,255,.6)"></div>
<div class="a" style="left:534px;top:425px;width:455px;height:6px;border-radius:0 0 4px 4px;background:#7f98b4;box-shadow:inset 0 -1px rgba(255,255,255,.6)"></div>
<div class="a" style="left:534px;top:32px;width:6px;height:100px;background:linear-gradient(#c6d2de,#bccad8 80%,#8499b3)"></div>
<div class="a" style="left:983px;top:32px;width:6px;height:100px;background:linear-gradient(#bfcbd7,#b5c3d1 80%,#8499b3)"></div>
<div class="t" style="left:542px;top:12px;font-size:11.7px;line-height:14px;color:#000">Observatory</div>
<div class="a" style="left:907px;top:5px;width:29px;height:19px;border:1px solid #3d4855;border-top:none;border-radius:0 0 0 5px;background:linear-gradient(#e2e7ec,#cdd5dd 45%,#9dadbd 50%,#a4b3c2 80%,#b4c1cd)"></div>
<div class="a" style="left:935px;top:5px;width:48px;height:19px;border:1px solid #3d2d2d;border-top:none;border-radius:0 0 5px 0;background:linear-gradient(#eeaaa0,#e0877a 45%,#c5402b 52%,#c94a34 80%,#d87a68)"></div>
<svg class="a" style="left:917px;top:7px" width="10" height="13"><path d="M2.6 4.3C2.6 2.6 3.6 1.8 5 1.8C6.5 1.8 7.5 2.6 7.5 4C7.5 5.4 5.2 5.9 5.2 7.4V8.2" fill="none" stroke="#3c4650" stroke-width="3.6" stroke-linecap="round"/><circle cx="5.2" cy="10.8" r="1.9" fill="#3c4650"/><path d="M2.6 4.3C2.6 2.6 3.6 1.8 5 1.8C6.5 1.8 7.5 2.6 7.5 4C7.5 5.4 5.2 5.9 5.2 7.4V8.2" fill="none" stroke="#fff" stroke-width="1.8" stroke-linecap="butt"/><circle cx="5.2" cy="10.8" r="1" fill="#fff"/></svg>
<svg class="a" style="left:954px;top:9px" width="12" height="11"><path d="M0.5 0.5H3.6L5.5 3.2L7.4 0.5H10.5L7.3 4.75L10.5 9H7.4L5.5 6.3L3.6 9H0.5L3.7 4.75Z" fill="#fff" stroke="#4a2a24" stroke-width="1.1" stroke-linejoin="round"/></svg>
<div class="a" style="left:539px;top:32px;width:445px;height:394px;border:1px solid rgba(255,255,255,.6)"></div>
<div class="a" style="left:540px;top:33px;width:443px;height:392px;border:1px solid #3a4654;background:#f0f0f0;box-shadow:inset 1px 1px #fff,inset -1px -1px #fff"></div>

<!-- tabs -->
<div class="a" style="left:548px;top:62px;width:434px;height:362px;box-shadow:inset 1px 1px #fff"></div>
<div class="tab" style="left:550px;width:43px;box-shadow:inset 1px 1px #fff">All Sky</div>
<div class="tab" style="left:591px;top:43px;height:20px;width:45px;line-height:18px">Zoom</div>
<div class="tab" style="left:636px;width:46px">Catalog</div>
<div class="tab" style="left:682px;width:63px">Telescope</div>
<div class="tab" style="left:745px;width:41px">Dome</div>
<div class="tab" style="left:786px;width:42px">Focus</div>
<div class="tab" style="left:828px;width:42px">Status</div>
<div class="tab" style="left:870px;width:42px">Setup</div>
<!-- info box -->
<div class="a sunkg" style="left:552px;top:67px;width:354px;height:59px"></div>
<div class="t" style="left:555px;top:71px;font-size:10.6px">View RA:<br>View Dec:<br>View FOV:<br>Rotator PA:</div>
<div class="t" style="left:615px;top:71px;font-size:10.6px">22h 47m 07s<br>58&deg; 05' 11''<br>1&deg;<br>N/A</div>
<div class="t" style="left:705px;top:71px;font-size:10.6px">Mouse RA:<br>Mouse Dec:<br>Mouse Alt:<br>Mouse Az:</div>
<div class="t" style="left:765px;top:71px;font-size:10.6px">22h 41m 32s<br>58&deg; 32' 02''<br>49&deg; 00' 22''<br>46&deg; 30' 48''</div>
<div class="t" style="left:918px;top:71px;font-size:11px">Options</div>
<div class="a btn" style="left:959px;top:67px;width:20px;height:21px"></div>
<div class="a" style="left:966px;top:71px;width:0;height:0;border-left:8px solid #000;border-top:6px solid transparent;border-bottom:6px solid transparent"></div>
<div class="a btn" style="left:916px;top:95px;width:63px;height:33px;padding-top:3px;font-size:11px">Slaved to<br>Telescope</div>
<!-- map -->
<div class="a" style="left:552px;top:132px;width:427px;height:289px;background:#000;overflow:hidden">
<svg width="427" height="289"><g transform="translate(0,-1)">
<defs><clipPath id="cr"><rect x="143" y="91" width="144" height="108"/></clipPath><filter id="nz"><feTurbulence type="fractalNoise" baseFrequency="0.55" numOctaves="2" seed="3"/><feColorMatrix values="0 0 0 0 0.2  0 0 0 0 0.2  0 0 0 0 0.2  0 0 0 1.2 -0.35"/></filter></defs>
<rect x="143" y="91" width="144" height="108" fill="#262626"/>
<g clip-path="url(#cr)"><rect x="143" y="91" width="144" height="108" filter="url(#nz)" opacity="0.4"/></g>
<circle cx="224" cy="163" r="95.5" fill="none" stroke="#d8d8d8" stroke-width="1" stroke-dasharray="2 4"/>
<circle cx="204" cy="132" r="28" fill="none" stroke="#d8d8d8" stroke-width="1" stroke-dasharray="2 4"/>
<circle cx="23" cy="78" r="11" fill="none" stroke="#c8c8c8" stroke-width="1" stroke-dasharray="2 4"/>
<circle cx="203" cy="31" r="5.8" fill="#fff"/>
<circle cx="292" cy="128" r="5.5" fill="#fff"/>
<path d="M158.5 26 L162.5 30 L158.5 34 L154.5 30 Z M158.5 24.5V26 M158.5 34V35.5 M153 30H154.5 M162.5 30H164" fill="none" stroke="#4c9a4c" stroke-width="1"/>
<circle cx="172" cy="111" r="1.1" fill="#eee"/>
<circle cx="196" cy="117" r="1.4" fill="#fff"/>
<circle cx="186" cy="146" r="1" fill="#ddd"/>
<circle cx="170" cy="166.5" r="1.2" fill="#eee"/>
<circle cx="213" cy="148" r="0.9" fill="#ccc"/>
<circle cx="252.5" cy="151.5" r="1.2" fill="#aaa"/>
<circle cx="252.5" cy="111.5" r="0.9" fill="#999"/>
<circle cx="167.5" cy="196" r="0.9" fill="#999"/>
<text x="163.5" y="47.5" font-family="Liberation Sans" font-size="12" fill="#f0f0f0">K4-57</text>
</g></svg></div>

<!-- ================= PinPoint window ================= -->
<div class="a" style="left:1px;top:425px;width:492px;height:374px;border:1px solid #323d49;border-radius:7px 7px 5px 5px;background:#adc1d6;box-shadow:inset 0 0 0 1px rgba(255,255,255,.55)"></div>
<div class="a" style="left:2px;top:426px;width:490px;height:27px;border-radius:6px 6px 0 0;background:linear-gradient(90deg,#c8d6e4,#ccd9e7 15%,#b7c9dc 40%,#b8cadd 70%,#c2d2e3 90%,#bccde0)"></div>
<div class="a" style="left:2px;top:426px;width:490px;height:1px;background:rgba(255,255,255,.6)"></div>
<div class="t" style="left:10px;top:433px;font-size:12px;line-height:14px">PinPoint Astrometry</div>
<div class="a" style="left:411px;top:426px;width:75px;height:18px;border:1px solid #6e7d8e;border-top:none;border-radius:0 0 4px 4px;background:linear-gradient(#c9d7e5,#bfcfe0)"></div>
<div class="a" style="left:438px;top:426px;width:1px;height:18px;background:#6e7d8e"></div>
<svg class="a" style="left:421px;top:428px" width="10" height="13"><path d="M2.6 4.3C2.6 2.6 3.6 1.8 5 1.8C6.5 1.8 7.5 2.6 7.5 4C7.5 5.4 5.2 5.9 5.2 7.4V8.2" fill="none" stroke="#3c4650" stroke-width="3.6" stroke-linecap="round"/><circle cx="5.2" cy="10.8" r="1.9" fill="#3c4650"/><path d="M2.6 4.3C2.6 2.6 3.6 1.8 5 1.8C6.5 1.8 7.5 2.6 7.5 4C7.5 5.4 5.2 5.9 5.2 7.4V8.2" fill="none" stroke="#fff" stroke-width="1.8" stroke-linecap="butt"/><circle cx="5.2" cy="10.8" r="1" fill="#fff"/></svg>
<svg class="a" style="left:457px;top:430px" width="12" height="11"><path d="M0.5 0.5H3.6L5.5 3.2L7.4 0.5H10.5L7.3 4.75L10.5 9H7.4L5.5 6.3L3.6 9H0.5L3.7 4.75Z" fill="#fff" stroke="#3c4650" stroke-width="1.1" stroke-linejoin="round"/></svg>
<div class="a" style="left:7px;top:453px;width:480px;height:340px;border:1px solid rgba(255,255,255,.6)"></div>
<div class="a" style="left:8px;top:454px;width:478px;height:338px;border:1px solid #3a4654;background:#f0f0f0;box-shadow:inset 1px 1px #fff,inset -1px -1px #fff"></div>


<!-- Detection Setup -->
<div class="a grp" style="left:20px;top:472px;width:194px;height:134px"></div>
<div class="gl" style="left:27px;top:467px">Detection Setup</div>
<div class="t" style="left:30px;top:489px">Brightness</div>
<div class="a sunk" style="left:143px;top:486px;width:59px;height:19px"></div>
<div class="t" style="left:146px;top:490px">0.00</div>
<div class="spin" style="left:185px;top:488px;height:16px"><i class="u"></i><i class="d"></i></div>
<div class="t" style="left:30px;top:515px">Standard Deviation</div>
<div class="a sunk" style="left:143px;top:512px;width:59px;height:19px"></div>
<div class="t" style="left:146px;top:515px">3.00</div>
<div class="spin" style="left:185px;top:514px;height:16px"><i class="u"></i><i class="d"></i></div>
<div class="t" style="left:30px;top:536px;line-height:12.8px">Maximum Number of<br>Stars Used to Solve</div>
<div class="a sunk" style="left:143px;top:538px;width:59px;height:19px"></div>
<div class="t" style="left:146px;top:542px">500</div>
<div class="spin" style="left:185px;top:540px;height:16px"><i class="u"></i><i class="d"></i></div>
<div class="a btn" style="left:29px;top:575px;width:65px;height:23px;line-height:22px">Advanced...</div>
<div class="a btn" style="left:143px;top:575px;width:65px;height:23px;line-height:22px">Defaults</div>

<!-- Image Parameters -->
<div class="a grp" style="left:234px;top:472px;width:239px;height:134px"></div>
<div class="gl" style="left:241px;top:467px">Image Parameters</div>
<div class="t" style="left:245px;top:487px;line-height:13.5px">Pixel Scale<br>(arcsec/pixel)</div>
<div class="t" style="left:331px;top:490px">X</div>
<div class="a sunkg" style="left:345px;top:486px;width:47px;height:20px"></div>
<div class="t" style="left:348px;top:490px">1.332</div>
<div class="t" style="left:402px;top:490px">Y</div>
<div class="a sunkg" style="left:416px;top:486px;width:47px;height:20px"></div>
<div class="t" style="left:419px;top:490px">1.331</div>
<div class="chk" style="left:246px;top:524px"></div><svg class="a" style="left:249px;top:527px" width="7" height="7" shape-rendering="crispEdges" fill="#000"><rect x="6" y="0" width="1" height="1"/><rect x="5" y="1" width="1" height="1"/><rect x="6" y="1" width="1" height="1"/><rect x="0" y="2" width="1" height="1"/><rect x="4" y="2" width="1" height="1"/><rect x="5" y="2" width="1" height="1"/><rect x="6" y="2" width="1" height="1"/><rect x="0" y="3" width="1" height="1"/><rect x="1" y="3" width="1" height="1"/><rect x="3" y="3" width="1" height="1"/><rect x="4" y="3" width="1" height="1"/><rect x="5" y="3" width="1" height="1"/><rect x="0" y="4" width="1" height="1"/><rect x="1" y="4" width="1" height="1"/><rect x="2" y="4" width="1" height="1"/><rect x="3" y="4" width="1" height="1"/><rect x="4" y="4" width="1" height="1"/><rect x="1" y="5" width="1" height="1"/><rect x="2" y="5" width="1" height="1"/><rect x="3" y="5" width="1" height="1"/><rect x="2" y="6" width="1" height="1"/></svg>
<div class="t" style="left:264px;top:518px;line-height:13px">FITS<br>scale</div>
<div class="a sunkg" style="left:294px;top:521px;width:71px;height:18px"></div>
<div class="t" style="left:297px;top:524px">in use</div>
<div class="a btn" style="left:375px;top:518px;width:89px;height:23px;line-height:22px;color:#a0a0a0">Set Pixel Scale...</div>
<div class="t" style="left:245px;top:557px">Approx. Center</div>
<div class="t" style="left:340px;top:558px">RA</div>
<div class="a sunkg" style="left:359px;top:554px;width:100px;height:19px"></div>
<div class="t" style="left:362px;top:558px">22 47 08</div>
<div class="spin" style="left:442px;top:556px;height:16px;opacity:.55"><i class="u"></i><i class="d"></i></div>
<div class="chk" style="left:246px;top:577px"></div><svg class="a" style="left:249px;top:580px" width="7" height="7" shape-rendering="crispEdges" fill="#000"><rect x="6" y="0" width="1" height="1"/><rect x="5" y="1" width="1" height="1"/><rect x="6" y="1" width="1" height="1"/><rect x="0" y="2" width="1" height="1"/><rect x="4" y="2" width="1" height="1"/><rect x="5" y="2" width="1" height="1"/><rect x="6" y="2" width="1" height="1"/><rect x="0" y="3" width="1" height="1"/><rect x="1" y="3" width="1" height="1"/><rect x="3" y="3" width="1" height="1"/><rect x="4" y="3" width="1" height="1"/><rect x="5" y="3" width="1" height="1"/><rect x="0" y="4" width="1" height="1"/><rect x="1" y="4" width="1" height="1"/><rect x="2" y="4" width="1" height="1"/><rect x="3" y="4" width="1" height="1"/><rect x="4" y="4" width="1" height="1"/><rect x="1" y="5" width="1" height="1"/><rect x="2" y="5" width="1" height="1"/><rect x="3" y="5" width="1" height="1"/><rect x="2" y="6" width="1" height="1"/></svg>
<div class="t" style="left:264px;top:571px;line-height:13px">FITS<br>center</div>
<div class="t" style="left:335px;top:585px">Dec</div>
<div class="a sunkg" style="left:359px;top:580px;width:100px;height:19px"></div>
<div class="t" style="left:362px;top:584px">58 06 10</div>
<div class="spin" style="left:442px;top:582px;height:16px;opacity:.55"><i class="u"></i><i class="d"></i></div>

<!-- Catalog Setup -->
<div class="a grp" style="left:20px;top:619px;width:453px;height:92px"></div>
<div class="gl" style="left:27px;top:614px">Catalog Setup</div>
<div class="t" style="left:30px;top:632px;line-height:13px">Reference<br>Catalog</div>
<div class="a sunk" style="left:90px;top:632px;width:119px;height:20px"></div>
<div class="t" style="left:93px;top:636px">GSC-1.1 (corrected)</div>
<div class="a btn" style="left:192px;top:634px;width:15px;height:16px"></div>
<div class="a" style="left:196px;top:640px;width:7px;height:4px;background:#000;clip-path:polygon(0 0,100% 0,50% 100%)"></div>
<div class="a btn" style="left:29px;top:663px;width:50px;height:23px;line-height:22px">Path...</div>
<div class="a sunkg" style="left:90px;top:665px;width:119px;height:19px"></div>
<div class="t" style="left:93px;top:669px">C:\GSC11\</div>
<div class="t" style="left:245px;top:632px;line-height:13px">Use stars from<br>magnitude</div>
<div class="a sunk" style="left:317px;top:634px;width:58px;height:19px"></div>
<div class="t" style="left:320px;top:638px">-2.00</div>
<div class="spin" style="left:358px;top:636px;height:16px"><i class="u"></i><i class="d"></i></div>
<div class="t" style="left:383px;top:636px">to</div>
<div class="a sunk" style="left:401px;top:634px;width:58px;height:19px"></div>
<div class="t" style="left:404px;top:638px">16.00</div>
<div class="spin" style="left:442px;top:636px;height:16px"><i class="u"></i><i class="d"></i></div>
<div class="t" style="left:245px;top:667px">Search Area (as % of image)</div>
<div class="a sunk" style="left:401px;top:663px;width:58px;height:19px"></div>
<div class="t" style="left:404px;top:667px">256.00</div>
<div class="spin" style="left:442px;top:665px;height:16px"><i class="u"></i><i class="d"></i></div>
<div class="chk" style="left:346px;top:691px"></div><svg class="a" style="left:349px;top:694px" width="7" height="7" shape-rendering="crispEdges" fill="#000"><rect x="6" y="0" width="1" height="1"/><rect x="5" y="1" width="1" height="1"/><rect x="6" y="1" width="1" height="1"/><rect x="0" y="2" width="1" height="1"/><rect x="4" y="2" width="1" height="1"/><rect x="5" y="2" width="1" height="1"/><rect x="6" y="2" width="1" height="1"/><rect x="0" y="3" width="1" height="1"/><rect x="1" y="3" width="1" height="1"/><rect x="3" y="3" width="1" height="1"/><rect x="4" y="3" width="1" height="1"/><rect x="5" y="3" width="1" height="1"/><rect x="0" y="4" width="1" height="1"/><rect x="1" y="4" width="1" height="1"/><rect x="2" y="4" width="1" height="1"/><rect x="3" y="4" width="1" height="1"/><rect x="4" y="4" width="1" height="1"/><rect x="1" y="5" width="1" height="1"/><rect x="2" y="5" width="1" height="1"/><rect x="3" y="5" width="1" height="1"/><rect x="2" y="6" width="1" height="1"/></svg>
<div class="t" style="left:364px;top:691px">Search outward spiral</div>

<!-- results -->
<div class="a sunkg" style="left:20px;top:723px;width:274px;height:61px"></div>
<div class="t" style="left:23px;top:727px;line-height:13.2px;font-size:10.7px">Matched 137 of 1930 image and 382 catalog stars;<br>Average residual 0.2 arcsec; order 4<br>RA 22h 47m 08s,&nbsp; Dec +58&deg; 05' 17''<br>Pos Angle +359&deg; 30', FL 999.1 mm, 1.33''/Pixel</div>
<div class="a" style="left:277px;top:725px;width:15px;height:57px;background:linear-gradient(90deg,#e6e6e6,#f2f2f2 40%,#eaeaea);border-left:1px solid #dcdcdc"></div>
<div class="a" style="left:282px;top:732px;width:7px;height:4px;background:#444;clip-path:polygon(50% 0,100% 100%,0 100%)"></div>
<div class="a" style="left:282px;top:773px;width:7px;height:4px;background:#444;clip-path:polygon(0 0,100% 0,50% 100%)"></div>
<div class="a" style="left:277px;top:750px;width:15px;height:15px;border:1px solid #8e8e8e;border-radius:2px;background:linear-gradient(90deg,#f6f6f6,#e8e8e8 50%,#d4d4d4 55%,#dcdcdc)"></div>
<div class="a" style="left:302px;top:728px;width:173px;height:18px;box-shadow:inset 1px 1px #a0a0a0,inset -1px -1px #fff"></div>
<div class="a btn" style="left:303px;top:757px;width:48px;height:23px;line-height:22px">Process</div>
<div class="a btn" style="left:365px;top:757px;width:48px;height:23px;line-height:22px;color:#a0a0a0">Stop</div>
<div class="a btn" style="left:426px;top:757px;width:48px;height:23px;line-height:22px">Close</div>

</body></html>
